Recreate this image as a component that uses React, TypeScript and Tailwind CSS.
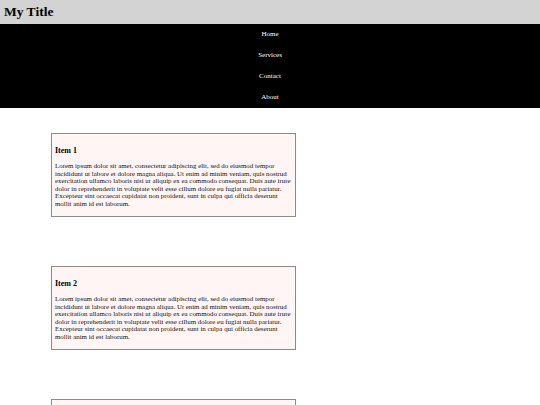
const LOREM =
  'Lorem ipsum dolor sit amet, consectetur adipiscing elit, sed do eiusmod tempor incididunt ut labore et dolore magna aliqua. Ut enim ad minim veniam, quis nostrud exercitation ullamco laboris nisi ut aliquip ex ea commodo consequat. Duis aute irure dolor in reprehenderit in voluptate velit esse cillum dolore eu fugiat nulla pariatur. Excepteur sint occaecat cupidatat non proident, sunt in culpa qui officia deserunt mollit anim id est laborum.';

const NAV = ['Home', 'Services', 'Contact', 'About'];
const ITEMS = ['Item 1', 'Item 2', 'Item 3'];

export default function App() {
  return (
    <div className="min-h-screen bg-white font-['Liberation_Serif',serif] text-black">
      <header className="h-[24px] bg-[#d3d3d3] flex items-center px-[4px]">
        <h1 className="text-[13.5px] font-bold leading-none">My Title</h1>
      </header>
      <nav className="bg-black">
        <ul>
          {NAV.map((n) => (
            <li
              key={n}
              className="h-[21px] flex items-center justify-center text-white text-[7px]"
            >
              {n}
            </li>
          ))}
        </ul>
      </nav>
      <main className="pt-[25px] pl-[51px] flex flex-col gap-[49px]">
        {ITEMS.map((t) => (
          <div
            key={t}
            className="w-[245px] h-[84px] border border-[#8a8a8a] bg-[#fff5f5] px-[3px] pt-[11px]"
          >
            <h2 className="text-[8px] font-bold leading-[12px]">{t}</h2>
            <p className="mt-[5px] text-[6.9px] leading-[7.6px] text-[#111]">{LOREM}</p>
          </div>
        ))}
      </main>
    </div>
  );
}
